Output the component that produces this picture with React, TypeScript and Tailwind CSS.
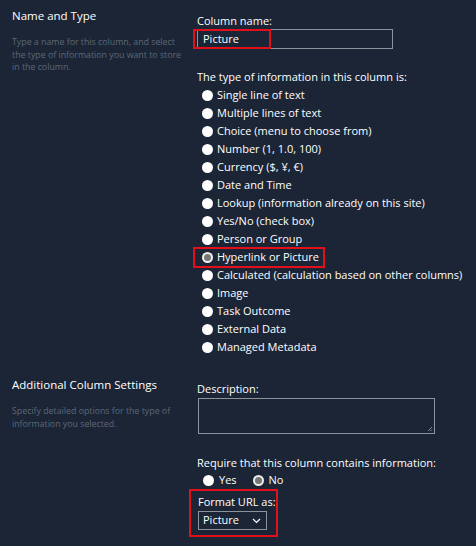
import React from 'react';

const types = [
  'Single line of text',
  'Multiple lines of text',
  'Choice (menu to choose from)',
  'Number (1, 1.0, 100)',
  'Currency ($, ¥, €)',
  'Date and Time',
  'Lookup (information already on this site)',
  'Yes/No (check box)',
  'Person or Group',
  'Hyperlink or Picture',
  'Calculated (calculation based on other columns)',
  'Image',
  'Task Outcome',
  'External Data',
  'Managed Metadata',
];

const Radio: React.FC<{ checked?: boolean }> = ({ checked }) =>
  checked ? (
    <span className="flex h-[11px] w-[11px] shrink-0 items-center justify-center rounded-full bg-[#eeeeee]">
      <span className="h-[7px] w-[7px] rounded-full bg-[#767676]" />
    </span>
  ) : (
    <span className="h-[11px] w-[11px] shrink-0 rounded-full bg-white" />
  );

const SectionInfo: React.FC<{ title: string; text: string }> = ({ title, text }) => (
  <div className="w-[197px] shrink-0 pl-[12px] pr-[12px]">
    <div className="text-[11.5px] leading-[16px] text-white">{title}</div>
    <p className="mt-[12px] text-[8.8px] leading-[12.5px] text-[#5d6876]">{text}</p>
  </div>
);

export default function App() {
  return (
    <div
      className="h-[546px] w-[476px] overflow-hidden bg-[#1b2536] text-white"
      style={{ fontFamily: '"Open Sans", "Noto Sans", sans-serif' }}
    >
      {/* Name and Type */}
      <div className="flex pt-[8px]">
        <SectionInfo
          title="Name and Type"
          text="Type a name for this column, and select the type of information you want to store in the column."
        />
        <div className="whitespace-nowrap pt-[5px] text-[11px]">
          <div className="leading-[16px]">Column name:</div>
          <div className="relative mt-[0px] h-[20px] w-[196px]">
            <div className="flex h-full items-center border border-[#8c939c] pl-[5px]">Picture</div>
            <div className="absolute -left-[4px] top-0 h-[20px] w-[78px] border-2 border-[#e3101b]" />
          </div>
          <div className="mt-[20px] leading-[16px]">The type of information in this column is:</div>
          <div className="mt-[1px] flex flex-col">
            {types.map((t) => {
              const sel = t === 'Hyperlink or Picture';
              return (
                <div key={t} className="flex h-[18px] items-center">
                  <div className="relative flex items-center gap-[4px] pl-[5px]">
                    <Radio checked={sel} />
                    <span className="leading-[18px]">{t}</span>
                    {sel && (
                      <div className="absolute -left-[4px] -right-[6px] -top-[1px] -bottom-[2px] border-2 border-[#e3101b]" />
                    )}
                  </div>
                </div>
              );
            })}
          </div>
        </div>
      </div>

      {/* Additional Column Settings */}
      <div className="mt-[17px] flex">
        <div className="pt-[4px]">
          <SectionInfo
            title="Additional Column Settings"
            text="Specify detailed options for the type of information you selected."
          />
        </div>
        <div className="whitespace-nowrap pt-[8px] text-[11px]">
          <div className="leading-[16px]">Description:</div>
          <div className="relative ml-[1px] mt-[1px] h-[36px] w-[237px] border border-[#8c939c]">
            <svg className="absolute bottom-[1px] right-[1px]" width="6" height="6" viewBox="0 0 6 6">
              <path d="M5 1 L1 5 M5 3.5 L3.5 5" stroke="#9aa0a8" strokeWidth="0.8" />
            </svg>
          </div>
          <div className="mt-[21px] leading-[16px]">Require that this column contains information:</div>
          <div className="flex h-[18px] items-center pl-[6px]">
            <Radio />
            <span className="ml-[5px]">Yes</span>
            <span className="ml-[16px]">
              <Radio checked />
            </span>
            <span className="ml-[5px]">No</span>
          </div>
          <div className="-ml-[8px] w-[89px] border-2 border-[#e3101b] pb-[5px] pl-[7px] pt-[3px]">
            <div className="leading-[16px]">Format URL as:</div>
            <div className="mt-[1px] flex h-[19px] w-[69px] items-center justify-between border border-[#8c939c] pl-[4px] pr-[5px]">
              <span>Picture</span>
              <svg width="9" height="6" viewBox="0 0 9 6">
                <path d="M1 1 L4.5 4.5 L8 1" stroke="#ffffff" strokeWidth="1.2" fill="none" />
              </svg>
            </div>
          </div>
        </div>
      </div>
    </div>
  );
}
